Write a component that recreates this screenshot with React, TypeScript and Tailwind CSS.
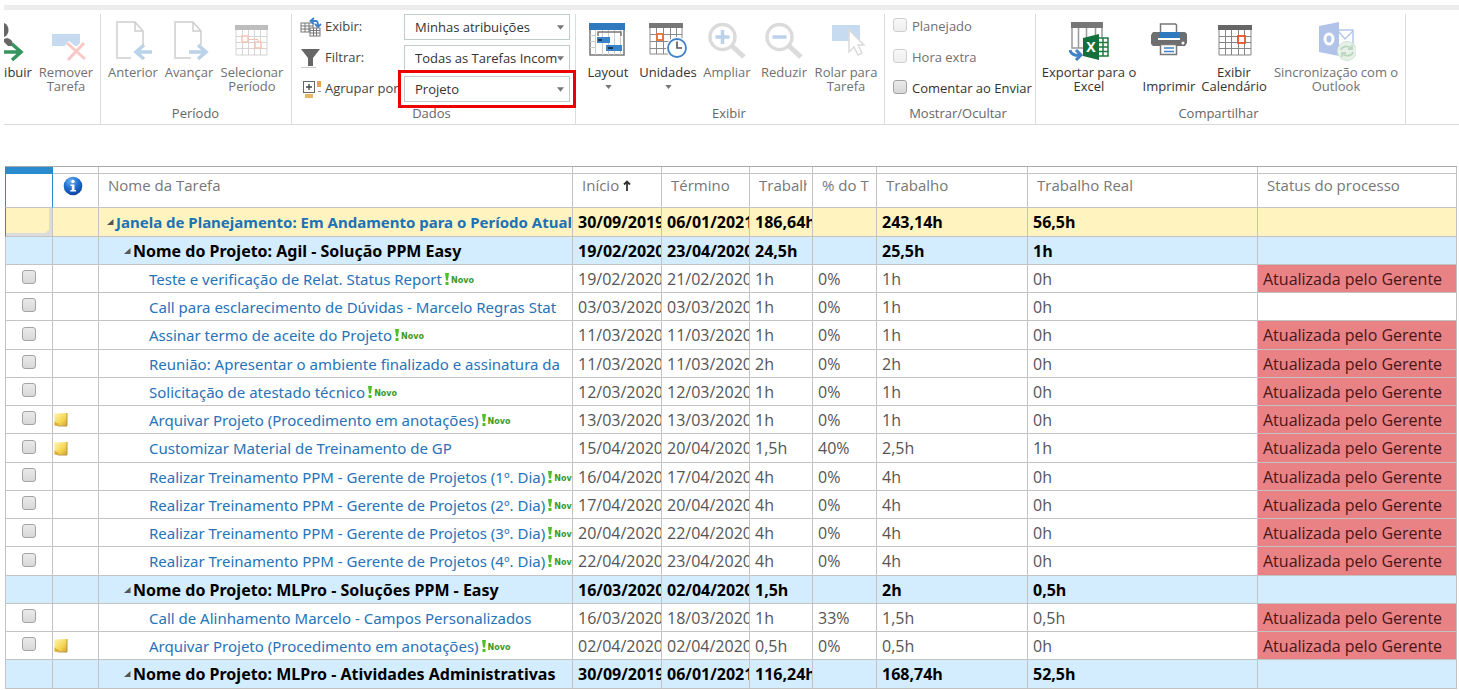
import type { ReactNode } from "react";

/* ---------- Ribbon icons ---------- */

function Icon({ children, faded = false }: { children: ReactNode; faded?: boolean }) {
  return (
    <svg
      viewBox="0 0 40 40"
      className={faded ? "h-10 w-10 shrink-0 opacity-35" : "h-10 w-10 shrink-0"}
      fill="none"
      aria-hidden="true"
    >
      {children}
    </svg>
  );
}

const AssignIcon = () => (
  <svg viewBox="0 0 28 40" className="h-10 w-7 shrink-0" fill="none" aria-hidden="true">
    <path d="M0 2c3 1 4.500 4 4.500 7S3 15 0 16z" fill="#666" />
    <path d="M0 18l3-1c4 1 6 3 6 8H4l-4-4z" fill="#666" />
    <path d="M0 31h15M8 23l9 8-9 8" stroke="#35945f" strokeWidth="3.500" />
  </svg>
);

const RemoveIcon = () => (
  <Icon faded>
    <rect x="6" y="13" width="28" height="12" fill="#5f9bd6" />
    <path d="M21 22l18 16M38 22L22 39" stroke="#fff" strokeWidth="6" />
    <path d="M21 22l18 16M38 22L22 39" stroke="#f0605c" strokeWidth="3" />
  </Icon>
);

const PreviousIcon = () => (
  <Icon faded>
    <path d="M18 37H4V1h18l8 9v14M22 1v9h8" stroke="#777" strokeWidth="1.500" />
    <path d="M39 31H23M31 24l-8 7 8 7" stroke="#3d7fc4" strokeWidth="3.500" />
  </Icon>
);

const NextIcon = () => (
  <Icon faded>
    <path d="M22 37H6V1h18l8 9v14M24 1v9h8" stroke="#777" strokeWidth="1.500" />
    <path d="M20 31h17M29 24l8 7-8 7" stroke="#3d7fc4" strokeWidth="3.500" />
  </Icon>
);

const SelectPeriodIcon = () => (
  <Icon faded>
    <rect x="3" y="4" width="33" height="5" fill="#444" />
    <path d="M4 9v25h31V9M4 15.500h31M4 21.500h31M4 27.500h31M10.500 9v25M16.500 9v25M22.500 9v25M28.500 9v25" stroke="#888" />
    <rect x="10" y="15" width="6" height="6" fill="#fff" stroke="#e0562b" strokeWidth="1.500" />
    <rect x="23" y="21" width="6" height="6" fill="#fff" stroke="#e0562b" strokeWidth="1.500" />
    <path d="M16 18.500h10V21" stroke="#e0562b" />
  </Icon>
);

const LayoutIcon = () => (
  <Icon>
    <path d="M2 8v26h34V8" stroke="#777" strokeWidth="1.500" />
    <path d="M7.500 8v26M2 14.500h6M2 20.500h6M2 26.500h6M14.500 8v26M20.500 8v26M26.500 8v26M32.500 8v26" stroke="#ccc" />
    <rect x="1" y="2" width="36" height="7" fill="#2f7abf" />
    <path d="M10 15v-4h23v4" stroke="#777" strokeWidth="1.500" />
    <rect x="9" y="16" width="13" height="6" fill="#3b83c9" />
    <rect x="18" y="24" width="16" height="6" fill="#3b83c9" />
    <path d="M10 19h4M20 27h5" stroke="#123" strokeWidth="1.500" />
  </Icon>
);

const UnitsIcon = () => (
  <Icon>
    <rect x="1" y="2" width="34" height="5" fill="#777" />
    <path d="M2 7v26h32V7M2 13.500h32M2 20.500h32M2 27.500h32M8.500 7v26M15.500 7v26M22.500 7v26M28.500 7v26" stroke="#8a8a8a" />
    <rect x="9" y="13" width="6" height="6" fill="#fff" stroke="#e8703a" strokeWidth="1.800" />
    <circle cx="29" cy="27" r="11" fill="#fff" />
    <circle cx="29" cy="27" r="9" fill="#fff" stroke="#3f82c6" strokeWidth="1.800" />
    <path d="M29 20.500V27h5" stroke="#555" strokeWidth="1.600" />
  </Icon>
);

const ZoomIcon = ({ plus = false }: { plus?: boolean }) => (
  <Icon faded>
    <circle cx="15.500" cy="16" r="12.500" stroke="#999" strokeWidth="3.400" />
    <path d="M25 25l12 11" stroke="#999" strokeWidth="5" />
    <path d="M8.500 16h14" stroke="#3d7fc4" strokeWidth="3.500" />
    {plus && <path d="M15.500 9v14" stroke="#3d7fc4" strokeWidth="3.500" />}
  </Icon>
);

const ScrollToIcon = () => (
  <Icon faded>
    <rect x="6" y="4" width="28" height="16" rx="1" fill="#5f9bd6" />
    <path d="M23 9v22l5-5 4 8 4-2-4-8h6z" fill="#fff" stroke="#999" strokeWidth="1.500" />
  </Icon>
);

const ExcelIcon = () => (
  <Icon>
    <rect x="2" y="1" width="32" height="6" fill="#777" />
    <path d="M3 7v20h30V7M9.500 7v20M17.500 7v20M26.500 7v12" stroke="#999" strokeWidth="1.500" />
    <rect x="28" y="17" width="11" height="18" fill="#fff" stroke="#1f7a3f" strokeWidth="1.500" />
    <path d="M29 21.500h10M29 26h10M29 30.500h10M34 17v18" stroke="#1f7a3f" strokeWidth="1.500" />
    <path d="M14 17l16-4v26l-16-4z" fill="#13703a" />
    <text x="22" y="31" textAnchor="middle" fontFamily="Open Sans, sans-serif" fontWeight="700" fontSize="14" fill="#fff">
      X
    </text>
    <path d="M1 29c1 4 4 5.500 9 5.500M7 29l5 5-5 5" stroke="#3f82c6" strokeWidth="3" />
  </Icon>
);

const PrintIcon = () => (
  <Icon>
    <path d="M4 11h32l2 2v9l-2 3H4l-2-2v-9z" fill="#6e6e6e" />
    <path d="M11.500 12V3h15l1 1v8" fill="#fff" stroke="#777" strokeWidth="1.500" />
    <rect x="10" y="11" width="20" height="6" fill="#2f7abf" />
    <rect x="9" y="17" width="22" height="2" fill="#fff" />
    <rect x="11.500" y="23.500" width="16" height="10" fill="#fff" stroke="#777" strokeWidth="1.500" />
    <path d="M15 27h10M15 30.500h10" stroke="#3f82c6" strokeWidth="1.600" />
    <circle cx="34" cy="22" r="1.500" fill="#fff" />
  </Icon>
);

const CalendarIcon = () => (
  <Icon>
    <rect x="4" y="4" width="34" height="5" fill="#666" />
    <path d="M5 9v25h32V9M5 15.500h32M5 21.500h32M5 27.500h32M11.500 9v25M17.500 9v25M24.500 9v25M30.500 9v25" stroke="#858585" />
    <rect x="24" y="15" width="7" height="7" fill="#fff" stroke="#e0562b" strokeWidth="1.800" />
  </Icon>
);

const OutlookIcon = () => (
  <Icon faded>
    <rect x="22" y="9" width="15" height="18" fill="#fff" stroke="#2b62c4" strokeWidth="1.500" />
    <path d="M22 10l7 8 8-8" stroke="#2b62c4" strokeWidth="1.500" />
    <path d="M3 5l20-4v34L3 31z" fill="#2457c5" />
    <ellipse cx="13" cy="18" rx="4" ry="5" stroke="#fff" strokeWidth="3" />
    <circle cx="31" cy="30" r="9.500" fill="#bcd8bf" stroke="#7fb286" />
    <path d="M25 29c1-4 8-5 11-1M36 24v4h-4M37 31c-1 4-8 5-11 1M26 36v-4h4" stroke="#3f8f4c" strokeWidth="1.800" />
  </Icon>
);

const ViewIcon = () => (
  <svg viewBox="0 0 22 20" className="h-5 w-[22px] shrink-0" fill="none" aria-hidden="true">
    <rect x="1" y="6" width="12" height="9" fill="#fff" stroke="#777" />
    <path d="M1 9h12M1 12h12M5 6v9M9 6v9" stroke="#777" />
    <rect x="10" y="11" width="10" height="8" fill="#fff" stroke="#777" />
    <path d="M10 13.500h10M10 16h10M13.500 11v8M16.500 11v8" stroke="#777" />
    <path d="M11 4h5c2 0 2 2 2 5M14 1l-3.500 3L14 7M15 7l3 3 3-3" stroke="#3f7fcb" strokeWidth="1.800" />
  </svg>
);

const FilterIcon = () => (
  <svg viewBox="0 0 22 20" className="h-5 w-[22px] shrink-0" aria-hidden="true">
    <path d="M1 1h19l-7 9v8H8v-8z" fill="#666" />
    <path d="M1 19.500h15" stroke="#ccc" />
  </svg>
);

const GroupIcon = () => (
  <svg viewBox="0 0 22 20" className="h-5 w-[22px] shrink-0" fill="none" aria-hidden="true">
    <rect x="3.500" y="2.500" width="11" height="11" fill="#fff" stroke="#666" />
    <path d="M9 5v6M6 8h6" stroke="#444" strokeWidth="1.300" />
    <rect x="17" y="2" width="4" height="6" fill="#e3a54e" />
    <rect x="5" y="15" width="8" height="4" fill="#e8b565" />
    <path d="M18 12.500h3" stroke="#999" />
  </svg>
);

const Caret = ({ className }: { className: string }) => (
  <svg viewBox="0 0 8 5" className={className} aria-hidden="true">
    <path d="M0 0h8L4 5z" fill="#777" />
  </svg>
);

/* ---------- Ribbon pieces ---------- */

function Group({ label, width, children }: { label: string; width: string; children: ReactNode }) {
  return (
    <section className={`flex h-[110px] shrink-0 flex-col border-r border-[#dcdcdc] ${width}`}>
      <div className="flex flex-1 items-start">{children}</div>
      <div className="mb-1 h-[14px] pr-1 text-center leading-[14px] text-[#666]">{label}</div>
    </section>
  );
}

interface ToolProps {
  icon: ReactNode;
  lines: string[];
  width: string;
  disabled?: boolean;
  menu?: boolean;
  low?: boolean;
}

function Tool({ icon, lines, width, disabled = false, menu = false, low = false }: ToolProps) {
  return (
    <button
      type="button"
      disabled={disabled}
      className={`flex shrink-0 flex-col items-center pt-[7px] ${width} ${disabled ? "text-[#707070]" : "text-[#333]"}`}
    >
      {icon}
      <span className={`flex flex-col items-center leading-[14px] whitespace-nowrap ${low ? "mt-[18px]" : "mt-1"}`}>
        {lines.map((line) => (
          <span key={line}>{line}</span>
        ))}
      </span>
      {menu && <Caret className="mt-[6px] h-1 w-[7px]" />}
    </button>
  );
}

interface PickerProps {
  id: string;
  icon: ReactNode;
  label: string;
  value: string;
  marked?: boolean;
}

function Picker({ id, icon, label, value, marked = false }: PickerProps) {
  return (
    <div className="flex h-[26px] items-center">
      <span className="w-[25px] shrink-0">{icon}</span>
      <label htmlFor={id} className="w-[79px] shrink-0 overflow-hidden whitespace-nowrap text-[#444]">
        {label}
      </label>
      <div
        className={`relative h-[26px] flex-1 bg-white ${
          marked ? "outline-[3px] outline-offset-[3px] outline-[#ec0000] outline-solid" : ""
        }`}
      >
        <select
          id={id}
          defaultValue={value}
          className="h-full w-full appearance-none border border-[#c3cbcb] bg-white pt-[2px] pr-3 pl-[10px] text-[#333]"
        >
          <option>{value}</option>
        </select>
        <Caret className="pointer-events-none absolute top-[11px] right-[6px] h-[5px] w-[7px]" />
      </div>
    </div>
  );
}

const boxClass =
  "h-[14px] w-[14px] shrink-0 appearance-none rounded-[3px] border border-[#a3a3a3] bg-linear-to-b from-[#eaeaea] to-[#d8d8d8] disabled:border-[#cfcfcf] disabled:from-[#f8f8f8] disabled:to-[#eeeeee]";

function Toggle({ label, disabled = false }: { label: string; disabled?: boolean }) {
  return (
    <label
      className={`flex h-[26px] items-center gap-[5px] whitespace-nowrap ${disabled ? "text-[#707070]" : "text-[#333]"}`}
    >
      <input type="checkbox" disabled={disabled} className={`${boxClass} mb-1`} />
      {label}
    </label>
  );
}

function Ribbon() {
  return (
    <header className="overflow-hidden pt-[5px] pl-1 text-[13px]">
      <div className="h-[5px] bg-[#ececec]" />
      <div className="mt-1 flex border-b border-[#d9d9d9]">
        <Group label="" width="w-[97px]">
          <Tool icon={<AssignIcon />} lines={["ibuir"]} width="w-7" />
          <Tool icon={<RemoveIcon />} lines={["Remover", "Tarefa"]} width="w-[68px]" disabled />
        </Group>
        <Group label="Período" width="w-[191px] pl-[3px]">
          <Tool icon={<PreviousIcon />} lines={["Anterior"]} width="w-[58px]" disabled />
          <Tool icon={<NextIcon />} lines={["Avançar"]} width="w-[54px]" disabled />
          <Tool icon={<SelectPeriodIcon />} lines={["Selecionar", "Período"]} width="w-[72px]" disabled />
        </Group>
        <Group label="Dados" width="w-[284px]">
          <div className="flex w-full flex-col gap-[5px] pr-[5px] pl-2">
            <Picker id="view" icon={<ViewIcon />} label="Exibir:" value="Minhas atribuições" />
            <Picker id="filter" icon={<FilterIcon />} label="Filtrar:" value="Todas as Tarefas Incom" />
            <Picker id="group" icon={<GroupIcon />} label="Agrupar por" value="Projeto" marked />
          </div>
        </Group>
        <Group label="Exibir" width="w-[309px] pl-[2px]">
          <Tool icon={<LayoutIcon />} lines={["Layout"]} width="w-[60px]" menu />
          <Tool icon={<UnitsIcon />} lines={["Unidades"]} width="w-[60px]" menu />
          <Tool icon={<ZoomIcon plus />} lines={["Ampliar"]} width="w-[58px]" disabled />
          <Tool icon={<ZoomIcon />} lines={["Reduzir"]} width="w-[56px]" disabled />
          <Tool icon={<ScrollToIcon />} lines={["Rolar para", "Tarefa"]} width="w-[68px]" disabled />
        </Group>
        <Group label="Mostrar/Ocultar" width="w-[151px]">
          <div className="flex flex-col gap-[5px] pl-2">
            <Toggle label="Planejado" disabled />
            <Toggle label="Hora extra" disabled />
            <Toggle label="Comentar ao Enviar" />
          </div>
        </Group>
        <Group label="Compartilhar" width="w-[370px]">
          <Tool icon={<ExcelIcon />} lines={["Exportar para o", "Excel"]} width="w-[106px]" />
          <Tool icon={<PrintIcon />} lines={["Imprimir"]} width="w-[54px]" low />
          <Tool icon={<CalendarIcon />} lines={["Exibir", "Calendário"]} width="w-[76px]" />
          <Tool icon={<OutlookIcon />} lines={["Sincronização com o", "Outlook"]} width="w-[128px]" disabled />
        </Group>
      </div>
    </header>
  );
}

/* ---------- Task table ---------- */

interface Row {
  kind: "window" | "project" | "task";
  name: string;
  start: string;
  end: string;
  left: string;
  percent?: string;
  work: string;
  actual: string;
  status?: boolean;
  isNew?: boolean;
  note?: boolean;
}

const rows: Row[] = [
  { kind: "window", name: "Janela de Planejamento: Em Andamento para o Período Atual", start: "30/09/2019", end: "06/01/2021", left: "186,64h", work: "243,14h", actual: "56,5h" },
  { kind: "project", name: "Nome do Projeto: Agil - Solução PPM Easy", start: "19/02/2020", end: "23/04/2020", left: "24,5h", work: "25,5h", actual: "1h" },
  { kind: "task", name: "Teste e verificação de Relat. Status Report", start: "19/02/2020", end: "21/02/2020", left: "1h", percent: "0%", work: "1h", actual: "0h", status: true, isNew: true },
  { kind: "task", name: "Call para esclarecimento de Dúvidas - Marcelo Regras Stat", start: "03/03/2020", end: "03/03/2020", left: "1h", percent: "0%", work: "1h", actual: "0h" },
  { kind: "task", name: "Assinar termo de aceite do Projeto", start: "11/03/2020", end: "11/03/2020", left: "1h", percent: "0%", work: "1h", actual: "0h", status: true, isNew: true },
  { kind: "task", name: "Reunião: Apresentar o ambiente finalizado e assinatura da", start: "11/03/2020", end: "11/03/2020", left: "2h", percent: "0%", work: "2h", actual: "0h", status: true },
  { kind: "task", name: "Solicitação de atestado técnico", start: "12/03/2020", end: "12/03/2020", left: "1h", percent: "0%", work: "1h", actual: "0h", status: true, isNew: true },
  { kind: "task", name: "Arquivar Projeto (Procedimento em anotações)", start: "13/03/2020", end: "13/03/2020", left: "1h", percent: "0%", work: "1h", actual: "0h", status: true, isNew: true, note: true },
  { kind: "task", name: "Customizar Material de Treinamento de GP", start: "15/04/2020", end: "20/04/2020", left: "1,5h", percent: "40%", work: "2,5h", actual: "1h", status: true, note: true },
  { kind: "task", name: "Realizar Treinamento PPM - Gerente de Projetos (1º. Dia)", start: "16/04/2020", end: "17/04/2020", left: "4h", percent: "0%", work: "4h", actual: "0h", status: true, isNew: true },
  { kind: "task", name: "Realizar Treinamento PPM - Gerente de Projetos (2º. Dia)", start: "17/04/2020", end: "20/04/2020", left: "4h", percent: "0%", work: "4h", actual: "0h", status: true, isNew: true },
  { kind: "task", name: "Realizar Treinamento PPM - Gerente de Projetos (3º. Dia)", start: "20/04/2020", end: "22/04/2020", left: "4h", percent: "0%", work: "4h", actual: "0h", status: true, isNew: true },
  { kind: "task", name: "Realizar Treinamento PPM - Gerente de Projetos (4º. Dia)", start: "22/04/2020", end: "23/04/2020", left: "4h", percent: "0%", work: "4h", actual: "0h", status: true, isNew: true },
  { kind: "project", name: "Nome do Projeto: MLPro - Soluções PPM - Easy", start: "16/03/2020", end: "02/04/2020", left: "1,5h", work: "2h", actual: "0,5h" },
  { kind: "task", name: "Call de Alinhamento Marcelo - Campos Personalizados", start: "16/03/2020", end: "18/03/2020", left: "1h", percent: "33%", work: "1,5h", actual: "0,5h", status: true },
  { kind: "task", name: "Arquivar Projeto (Procedimento em anotações)", start: "02/04/2020", end: "02/04/2020", left: "0,5h", percent: "0%", work: "0,5h", actual: "0h", status: true, isNew: true, note: true },
  { kind: "project", name: "Nome do Projeto: MLPro - Atividades Administrativas", start: "30/09/2019", end: "06/01/2021", left: "116,24h", work: "168,74h", actual: "52,5h" },
];

const InfoIcon = () => (
  <svg viewBox="0 0 20 20" className="ml-[10px] h-5 w-5" aria-hidden="true">
    <defs>
      <radialGradient id="info" cx="0.4" cy="0.25" r="0.8">
        <stop offset="0" stopColor="#6db4f2" />
        <stop offset="0.5" stopColor="#1f6fcf" />
        <stop offset="1" stopColor="#0c3f9c" />
      </radialGradient>
    </defs>
    <circle cx="10" cy="10" r="9.300" fill="url(#info)" />
    <circle cx="10" cy="5.500" r="1.700" fill="#fff" />
    <path d="M7.500 8.500h4v5.500h1.500v1.500H7.300V14h1.500v-4H7.500z" fill="#fff" />
  </svg>
);

const NoteIcon = () => (
  <svg viewBox="0 0 15 15" className="h-[15px] w-[15px]" aria-hidden="true">
    <defs>
      <linearGradient id="note" x1="0" y1="0" x2="1" y2="1">
        <stop offset="0" stopColor="#fff6b8" />
        <stop offset="0.6" stopColor="#f5d650" />
        <stop offset="1" stopColor="#cf9f30" />
      </linearGradient>
    </defs>
    <path d="M1 1.500L14 1v13l-12-.5z" fill="url(#note)" />
    <path d="M1.500 9c1 2 3 2.500 4.500 2.500L5 14l-3.500-.5z" fill="#e0ac30" />
    <path d="M14 1v13H5" fill="none" stroke="#b99743" />
  </svg>
);

const Expander = () => (
  <svg viewBox="0 0 7 6" className="mr-[2px] h-[6px] w-[7px] shrink-0" aria-hidden="true">
    <path d="M6.500 0v6H0z" fill="#555" />
  </svg>
);

const NewMark = () => (
  <>
    <svg viewBox="0 0 4 12" className="ml-[3px] h-3 w-1 shrink-0" aria-hidden="true">
      <path d="M0 0h4l-1 7.500H1z" fill="#4fbf2a" />
      <rect x="0.500" y="9" width="3" height="3" fill="#4fbf2a" />
    </svg>
    <span className="min-w-0 shrink-[99] overflow-hidden pt-[4px] pl-[2px] font-['DejaVu_Sans'] text-[8px] leading-3 font-bold text-[#3b9a26]">
      Novo
    </span>
  </>
);

const indent = { window: "pl-[8px]", project: "pl-[25px]", task: "pl-[50px]" };
const rowStyle = {
  window: "bg-[#fff4bf] font-bold text-black",
  project: "bg-[#d3ecfe] font-bold text-black",
  task: "bg-white text-[#555]",
};
const nameStyle = {
  window: "text-[15px] text-[#1b72b5]",
  project: "text-black",
  task: "text-[15px] text-[#2673b8]",
};

const cell = "overflow-hidden border-r border-b border-[#c3c3c3] p-0 whitespace-nowrap";
const value = `${cell} pl-[5px]`;

const headings = ["Nome da Tarefa", "Início", "Término", "Trabalh", "% do T", "Trabalho", "Trabalho Real", "Status do processo"];

function TaskRow({ row, active }: { row: Row; active: boolean }) {
  return (
    <tr className={`h-7 nth-[4n+1]:h-[29px] ${rowStyle[row.kind]}`}>
      <td className={`${cell} border-l ${active ? "border-l-[#2a8ccf]" : ""}`}>
        {active && (
          <div className="relative h-7 border-r-[3px] border-b-[3px] border-[#dcdcdc]">
            <span className="absolute -right-[5px] -bottom-[5px] h-2 w-2 rounded-full bg-[#dcdcdc]" />
          </div>
        )}
        {row.kind === "task" && (
          <input type="checkbox" aria-label={row.name} className={`${boxClass} mx-auto mb-[3px] block`} />
        )}
      </td>
      <td className={cell}>{row.note && <NoteIcon />}</td>
      <td className={cell}>
        <div className={`flex items-center font-['Noto_Sans','Open_Sans',sans-serif] ${indent[row.kind]}`}>
          {row.kind !== "task" && <Expander />}
          {row.kind === "task" ? (
            <a href="#" className={nameStyle[row.kind]}>
              {row.name}
            </a>
          ) : (
            <span className={nameStyle[row.kind]}>{row.name}</span>
          )}
          {row.isNew && <NewMark />}
        </div>
      </td>
      <td className={value}>{row.start}</td>
      <td className={value}>{row.end}</td>
      <td className={value}>{row.left}</td>
      <td className={value}>{row.percent}</td>
      <td className={value}>{row.work}</td>
      <td className={value}>{row.actual}</td>
      <td className={`${value} ${row.status ? "bg-[#e98284] text-[#4a1518]" : ""}`}>
        {row.status && "Atualizada pelo Gerente"}
      </td>
    </tr>
  );
}

function TaskTable() {
  return (
    <main className="mt-[41px] pr-[2px] pl-[5px]">
      <table className="w-full table-fixed border-separate border-spacing-0 border-t border-[#a8a8a8] text-[16px] leading-5">
        <colgroup>
          <col className="w-[48px]" />
          <col className="w-[46px]" />
          <col className="w-[474px]" />
          <col className="w-[89px]" />
          <col className="w-[88px]" />
          <col className="w-[63px]" />
          <col className="w-[64px]" />
          <col className="w-[151px]" />
          <col className="w-[230px]" />
          <col />
        </colgroup>
        <thead>
          <tr className="h-[7px]">
            <td className="border-b border-[#2a8ccf] bg-[#2a8ccf] p-0" />
            {["info", ...headings].map((key) => (
              <td key={key} className="border-r border-b border-[#c3c3c3] p-0" />
            ))}
          </tr>
          <tr className="h-[34px] text-left text-[15px] text-[#777]">
            <td className={`${cell} border-l border-l-[#2a8ccf] border-r-[#2a8ccf]`} />
            <th className="border-r border-b border-[#c3c3c3] p-0 pb-[10px]">
              <InfoIcon />
            </th>
            {headings.map((heading) => (
              <th key={heading} className="border-r border-b border-[#c3c3c3] p-0 pr-[5px] pb-3 pl-[9px] font-normal whitespace-nowrap">
                <div className="overflow-hidden">
                  {heading}
                  {heading === "Início" && (
                    <svg viewBox="0 0 8 11" className="ml-1 inline h-[11px] w-2 align-baseline" fill="none" aria-hidden="true">
                      <path d="M4 11V1.500M1 4.500l3-3 3 3" stroke="#333" strokeWidth="1.800" />
                    </svg>
                  )}
                </div>
              </th>
            ))}
          </tr>
        </thead>
        <tbody>
          {rows.map((row, index) => (
            <TaskRow key={index} row={row} active={index === 0} />
          ))}
        </tbody>
      </table>
    </main>
  );
}

export default function App() {
  return (
    <div className="overflow-hidden bg-white font-['Open_Sans','Noto_Sans',sans-serif]">
      <Ribbon />
      <TaskTable />
    </div>
  );
}
